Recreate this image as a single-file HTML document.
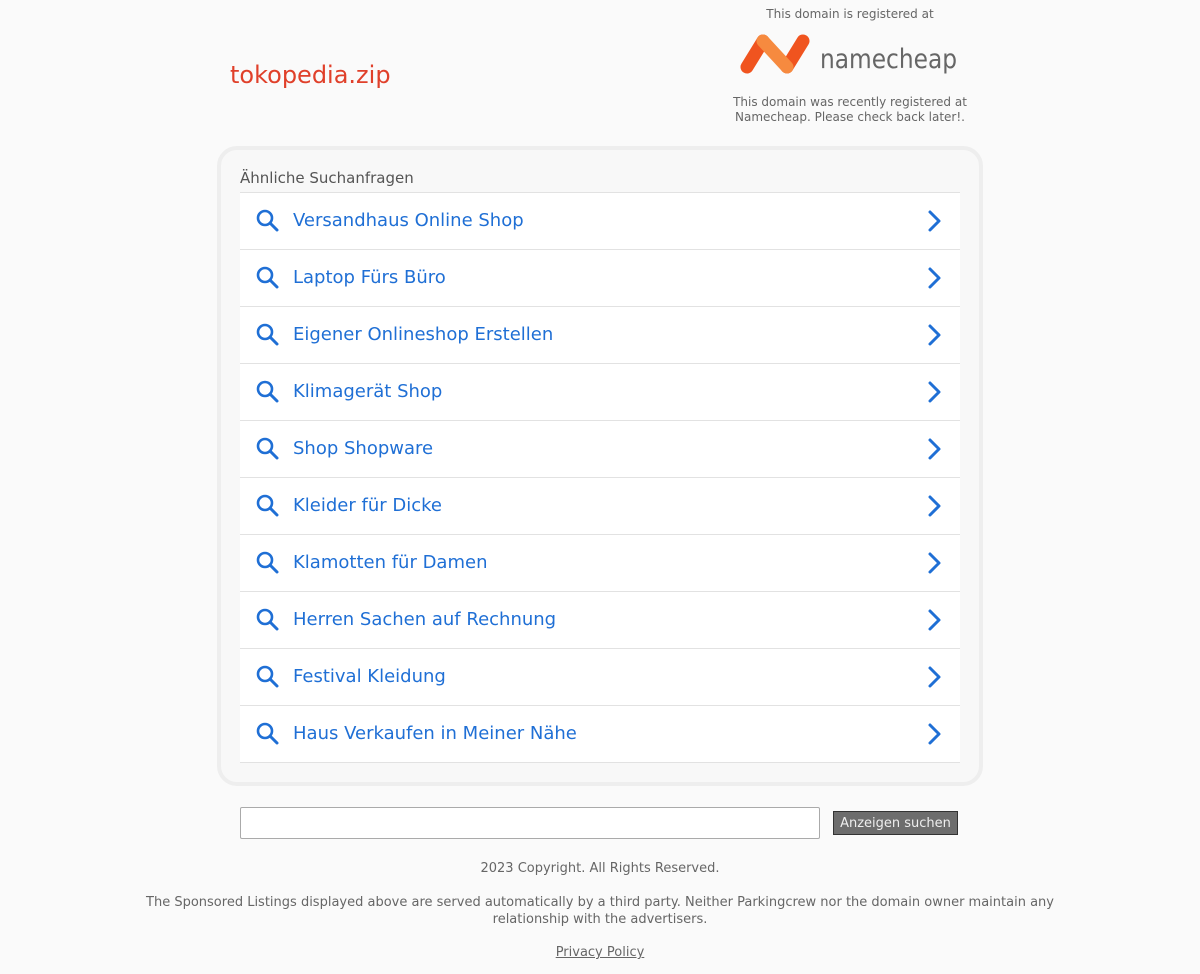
<!DOCTYPE html>
<html><head><meta charset="utf-8"><style>
body{margin:0;background:#fafafa;font-family:"DejaVu Sans","Liberation Sans",sans-serif;width:1200px;height:974px;position:relative;overflow:hidden}
.abs{position:absolute}
.title{left:230px;top:61px;font-size:24px;color:#e0402a}
.reg{left:720px;width:260px;text-align:center;font-size:12px;color:#666}
.box{left:217px;top:146px;width:758px;height:632px;border:4px solid #eeeeee;border-radius:20px;background:#f8f8f8}
.hd{left:240px;top:169px;font-size:15px;color:#555}
.row{position:absolute;left:240px;width:720px;height:56px;background:#fff;border-top:1px solid #e2e2e2}
.row span{position:absolute;left:53px;top:17px;font-size:18px;color:#1f6fd5}
.row svg.s{position:absolute;left:15px;top:15px}
.row svg.c{position:absolute;left:685px;top:16px}
.inp{left:240px;top:807px;width:578px;height:30px;border:1px solid #aaa;border-radius:2px;background:#fff}
.btn{left:833px;top:811px;width:123px;height:22px;background:#6d6d6d;border:1px solid #333;color:#eee;font-size:13px;text-align:center;line-height:23px}
.f{left:0;width:1200px;text-align:center;font-size:13px;color:#666}
</style></head><body>
<div class="abs title">tokopedia.zip</div>
<div class="abs reg" style="top:7px">This domain is registered at</div>
<svg class="abs" style="left:738px;top:32px" width="225" height="44">
<path d="M9 35 L25 9" stroke="#f0541f" stroke-width="13" stroke-linecap="round"/>
<path d="M65 9 L49 35" stroke="#f0541f" stroke-width="13" stroke-linecap="round"/>
<path d="M25 9 L49 35" stroke="#f68a3f" stroke-width="13" stroke-linecap="round"/>
<text x="82" y="36" font-family="DejaVu Sans,sans-serif" font-size="27" fill="#666" textLength="137" lengthAdjust="spacingAndGlyphs">namecheap</text>
</svg>
<div class="abs reg" style="top:95px;line-height:15px">This domain was recently registered at<br>Namecheap. Please check back later!.</div>
<div class="abs box"></div>
<div class="abs hd">Ähnliche Suchanfragen</div>
<div class="abs inp"></div>
<div class="abs btn">Anzeigen suchen</div>
<div class="abs f" style="top:861px">2023 Copyright. All Rights Reserved.</div>
<div class="abs f" style="top:894px;line-height:17px;left:140px;width:920px">The Sponsored Listings displayed above are served automatically by a third party. Neither Parkingcrew nor the domain owner maintain any relationship with the advertisers.</div>
<div class="abs f" style="top:945px"><span style="text-decoration:underline">Privacy Policy</span></div>
<div class="row" style="top:192px"><svg class="s" width="26" height="26" viewBox="0 0 26 26"><circle cx="10" cy="10" r="7" fill="none" stroke="#1f6fd5" stroke-width="2.6"/><path d="M15 15 L22 22" stroke="#1f6fd5" stroke-width="3" stroke-linecap="round"/></svg><span>Versandhaus Online Shop</span><svg class="c" width="20" height="24"><path d="M5 3 L14 12 L5 21" fill="none" stroke="#1f6fd5" stroke-width="3" stroke-linecap="round" stroke-linejoin="round"/></svg></div>
<div class="row" style="top:249px"><svg class="s" width="26" height="26" viewBox="0 0 26 26"><circle cx="10" cy="10" r="7" fill="none" stroke="#1f6fd5" stroke-width="2.6"/><path d="M15 15 L22 22" stroke="#1f6fd5" stroke-width="3" stroke-linecap="round"/></svg><span>Laptop Fürs Büro</span><svg class="c" width="20" height="24"><path d="M5 3 L14 12 L5 21" fill="none" stroke="#1f6fd5" stroke-width="3" stroke-linecap="round" stroke-linejoin="round"/></svg></div>
<div class="row" style="top:306px"><svg class="s" width="26" height="26" viewBox="0 0 26 26"><circle cx="10" cy="10" r="7" fill="none" stroke="#1f6fd5" stroke-width="2.6"/><path d="M15 15 L22 22" stroke="#1f6fd5" stroke-width="3" stroke-linecap="round"/></svg><span>Eigener Onlineshop Erstellen</span><svg class="c" width="20" height="24"><path d="M5 3 L14 12 L5 21" fill="none" stroke="#1f6fd5" stroke-width="3" stroke-linecap="round" stroke-linejoin="round"/></svg></div>
<div class="row" style="top:363px"><svg class="s" width="26" height="26" viewBox="0 0 26 26"><circle cx="10" cy="10" r="7" fill="none" stroke="#1f6fd5" stroke-width="2.6"/><path d="M15 15 L22 22" stroke="#1f6fd5" stroke-width="3" stroke-linecap="round"/></svg><span>Klimagerät Shop</span><svg class="c" width="20" height="24"><path d="M5 3 L14 12 L5 21" fill="none" stroke="#1f6fd5" stroke-width="3" stroke-linecap="round" stroke-linejoin="round"/></svg></div>
<div class="row" style="top:420px"><svg class="s" width="26" height="26" viewBox="0 0 26 26"><circle cx="10" cy="10" r="7" fill="none" stroke="#1f6fd5" stroke-width="2.6"/><path d="M15 15 L22 22" stroke="#1f6fd5" stroke-width="3" stroke-linecap="round"/></svg><span>Shop Shopware</span><svg class="c" width="20" height="24"><path d="M5 3 L14 12 L5 21" fill="none" stroke="#1f6fd5" stroke-width="3" stroke-linecap="round" stroke-linejoin="round"/></svg></div>
<div class="row" style="top:477px"><svg class="s" width="26" height="26" viewBox="0 0 26 26"><circle cx="10" cy="10" r="7" fill="none" stroke="#1f6fd5" stroke-width="2.6"/><path d="M15 15 L22 22" stroke="#1f6fd5" stroke-width="3" stroke-linecap="round"/></svg><span>Kleider für Dicke</span><svg class="c" width="20" height="24"><path d="M5 3 L14 12 L5 21" fill="none" stroke="#1f6fd5" stroke-width="3" stroke-linecap="round" stroke-linejoin="round"/></svg></div>
<div class="row" style="top:534px"><svg class="s" width="26" height="26" viewBox="0 0 26 26"><circle cx="10" cy="10" r="7" fill="none" stroke="#1f6fd5" stroke-width="2.6"/><path d="M15 15 L22 22" stroke="#1f6fd5" stroke-width="3" stroke-linecap="round"/></svg><span>Klamotten für Damen</span><svg class="c" width="20" height="24"><path d="M5 3 L14 12 L5 21" fill="none" stroke="#1f6fd5" stroke-width="3" stroke-linecap="round" stroke-linejoin="round"/></svg></div>
<div class="row" style="top:591px"><svg class="s" width="26" height="26" viewBox="0 0 26 26"><circle cx="10" cy="10" r="7" fill="none" stroke="#1f6fd5" stroke-width="2.6"/><path d="M15 15 L22 22" stroke="#1f6fd5" stroke-width="3" stroke-linecap="round"/></svg><span>Herren Sachen auf Rechnung</span><svg class="c" width="20" height="24"><path d="M5 3 L14 12 L5 21" fill="none" stroke="#1f6fd5" stroke-width="3" stroke-linecap="round" stroke-linejoin="round"/></svg></div>
<div class="row" style="top:648px"><svg class="s" width="26" height="26" viewBox="0 0 26 26"><circle cx="10" cy="10" r="7" fill="none" stroke="#1f6fd5" stroke-width="2.6"/><path d="M15 15 L22 22" stroke="#1f6fd5" stroke-width="3" stroke-linecap="round"/></svg><span>Festival Kleidung</span><svg class="c" width="20" height="24"><path d="M5 3 L14 12 L5 21" fill="none" stroke="#1f6fd5" stroke-width="3" stroke-linecap="round" stroke-linejoin="round"/></svg></div>
<div class="row" style="top:705px;border-bottom:1px solid #e2e2e2"><svg class="s" width="26" height="26" viewBox="0 0 26 26"><circle cx="10" cy="10" r="7" fill="none" stroke="#1f6fd5" stroke-width="2.6"/><path d="M15 15 L22 22" stroke="#1f6fd5" stroke-width="3" stroke-linecap="round"/></svg><span>Haus Verkaufen in Meiner Nähe</span><svg class="c" width="20" height="24"><path d="M5 3 L14 12 L5 21" fill="none" stroke="#1f6fd5" stroke-width="3" stroke-linecap="round" stroke-linejoin="round"/></svg></div>
</body></html>
